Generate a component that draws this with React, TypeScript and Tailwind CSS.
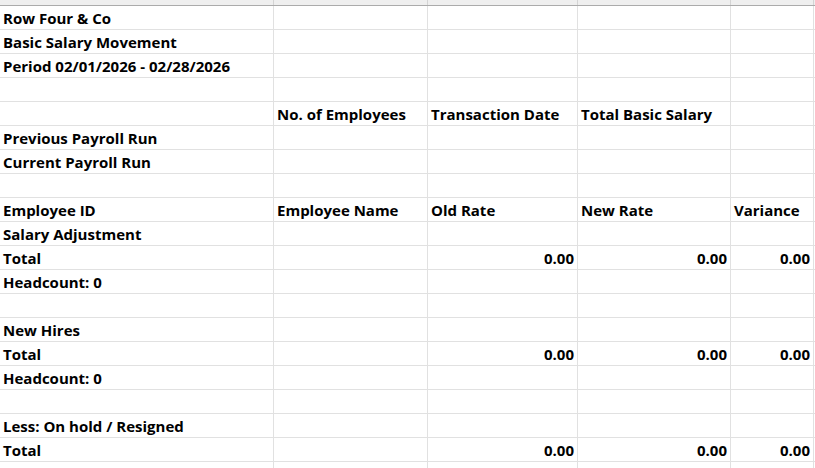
import React from "react";

type Row = (string | null)[];

const rows: Row[] = [
  ["Row Four & Co", null, null, null, null],
  ["Basic Salary Movement", null, null, null, null],
  ["Period 02/01/2026 - 02/28/2026", null, null, null, null],
  [null, null, null, null, null],
  [null, "No. of Employees", "Transaction Date", "Total Basic Salary", null],
  ["Previous Payroll Run", null, null, null, null],
  ["Current Payroll Run", null, null, null, null],
  [null, null, null, null, null],
  ["Employee ID", "Employee Name", "Old Rate", "New Rate", "Variance"],
  ["Salary Adjustment", null, null, null, null],
  ["Total", null, "#0.00", "#0.00", "#0.00"],
  ["Headcount: 0", null, null, null, null],
  [null, null, null, null, null],
  ["New Hires", null, null, null, null],
  ["Total", null, "#0.00", "#0.00", "#0.00"],
  ["Headcount: 0", null, null, null, null],
  [null, null, null, null, null],
  ["Less: On hold / Resigned", null, null, null, null],
  ["Total", null, "#0.00", "#0.00", "#0.00"],
  [null, null, null, null, null],
];

export default function App() {
  return (
    <div
      className="w-[815px] h-[468px] overflow-hidden bg-white text-black"
      style={{ fontFamily: "'Open Sans', sans-serif" }}
    >
      <div className="grid grid-cols-[274px_154px_150px_153px_83px_1fr] h-[6px] bg-[#efefef] border-b border-[#ababab]">
        {[0, 1, 2, 3, 4, 5].map((i) => (
          <div key={i} className={i < 5 ? "border-r border-[#d4d4d4]" : ""} />
        ))}
      </div>
      {rows.map((r, ri) => (
        <div
          key={ri}
          className="grid grid-cols-[274px_154px_150px_153px_83px_1fr] h-[24px]"
        >
          {[...r, null].map((c, ci) => {
            const num = c !== null && c.startsWith("#");
            const text = num ? c!.slice(1) : c;
            return (
              <div
                key={ci}
                className={`border-b border-[#e1e1e1] ${ci < 5 ? "border-r" : ""} flex items-end ${num ? "justify-end pr-[3px]" : "pl-[3px]"} pb-[1px] overflow-visible whitespace-nowrap`}
              >
                {text && (
                  <span className="text-[15px] font-bold leading-[20px]">{text}</span>
                )}
              </div>
            );
          })}
        </div>
      ))}
    </div>
  );
}
